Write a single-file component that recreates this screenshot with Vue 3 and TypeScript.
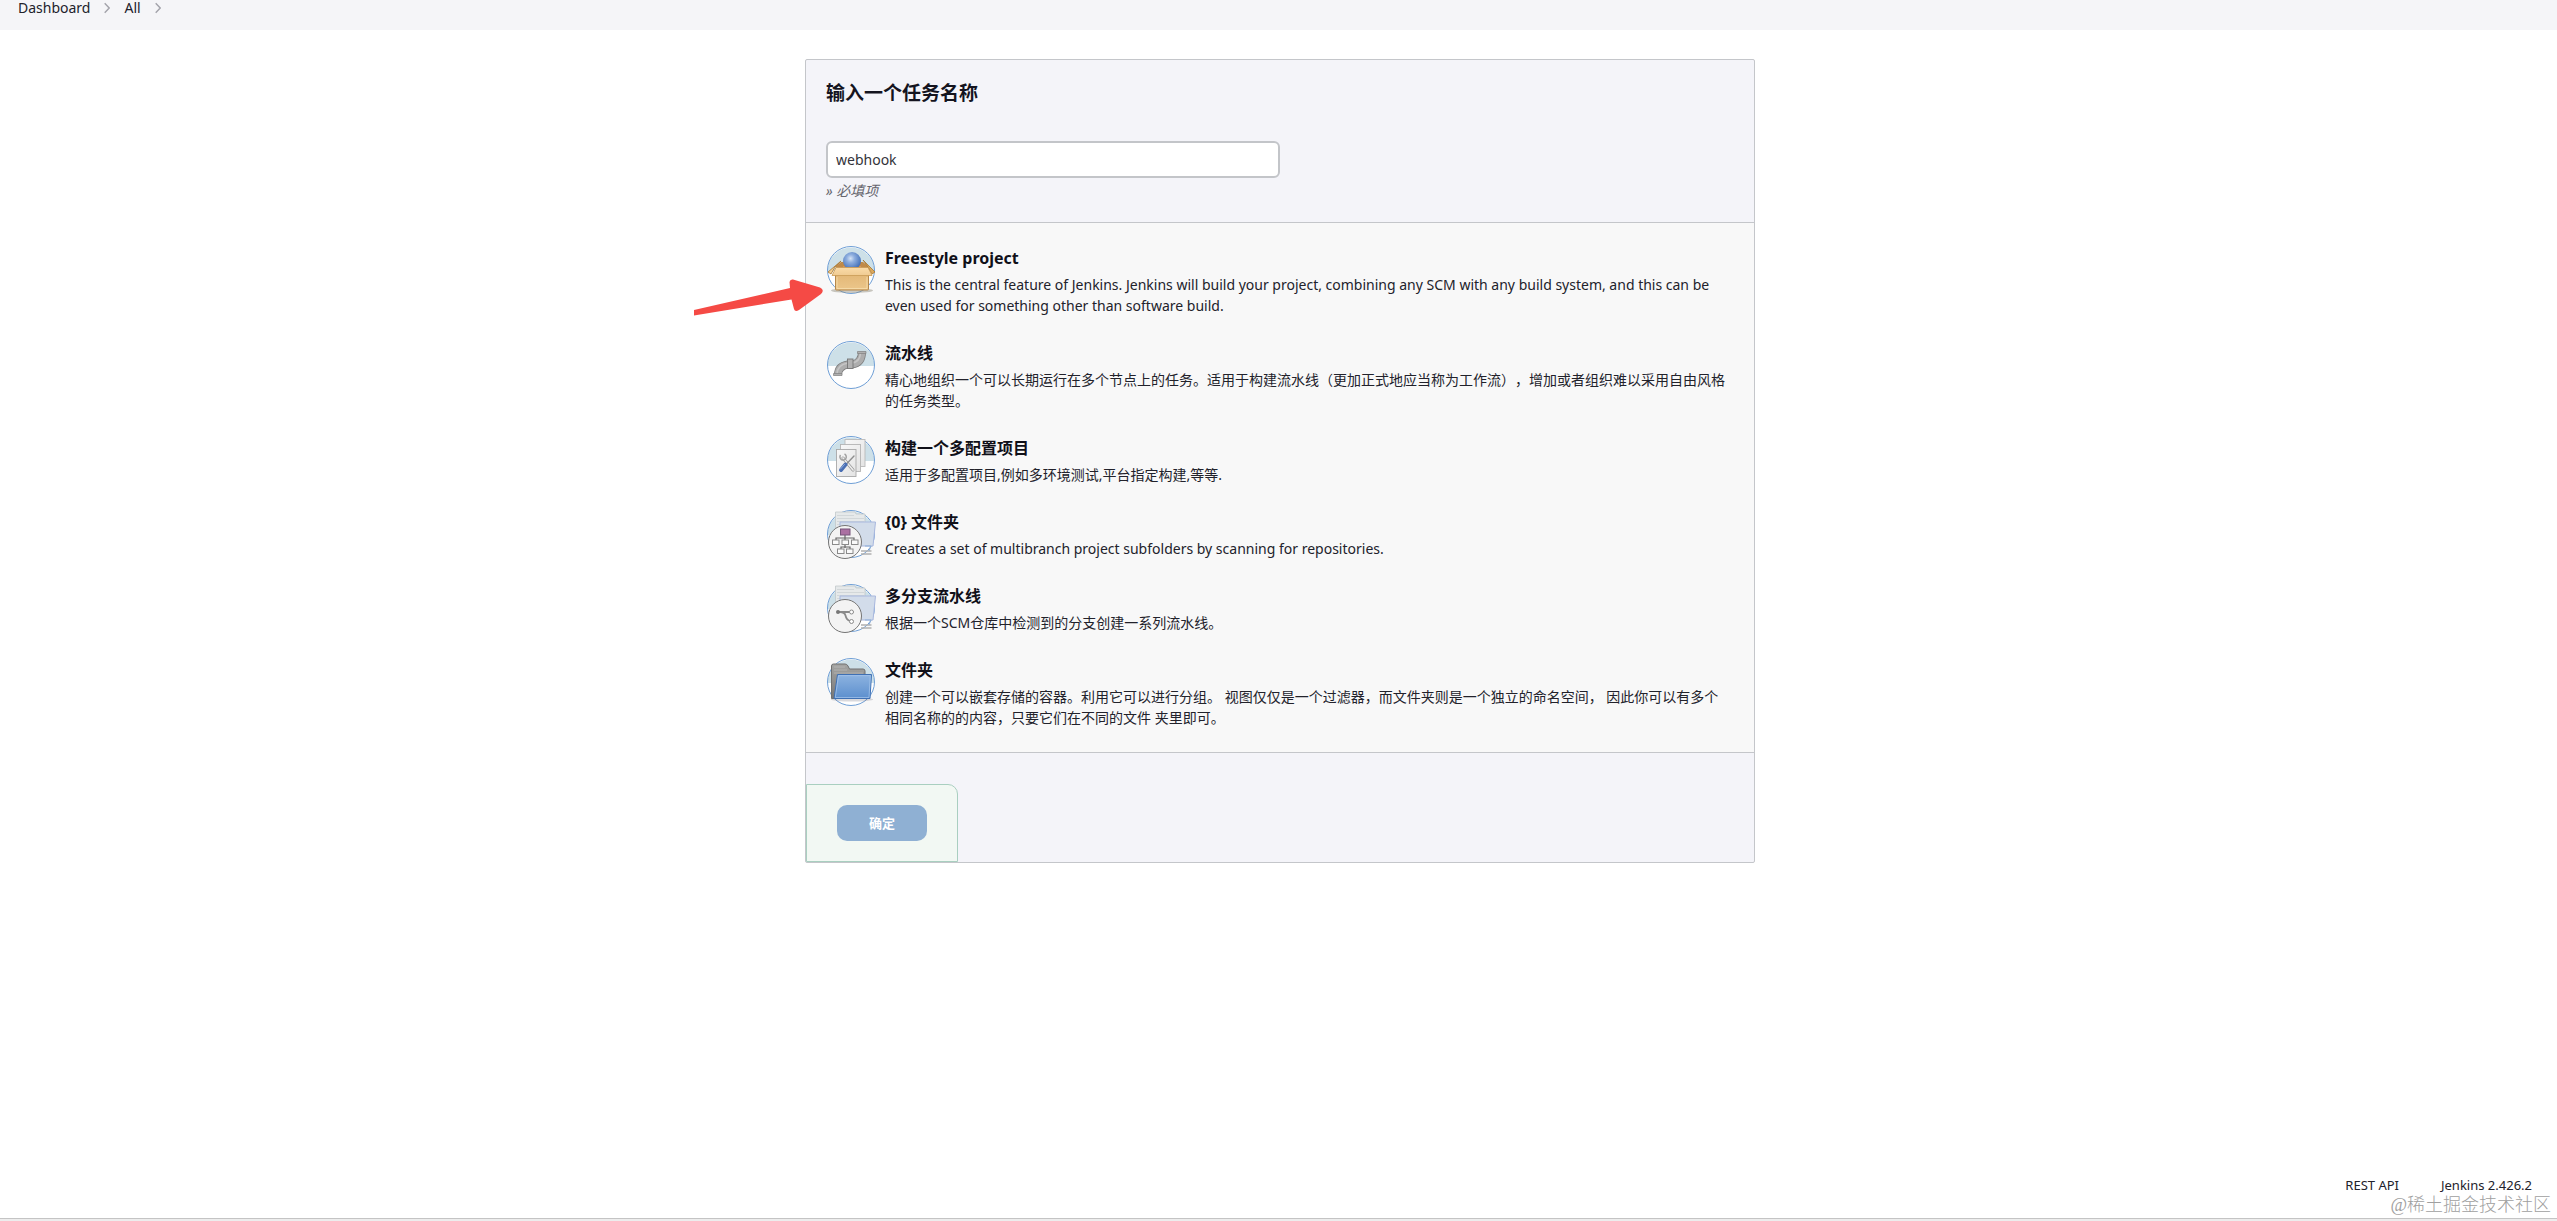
<script setup lang="ts">
import { ref } from 'vue'

type IconName = 'box' | 'pipe' | 'matrix' | 'org' | 'branch' | 'folder'

interface JobType {
  icon: IconName
  title: string
  text: string
}

const jobName = ref('webhook')
const selected = ref<IconName | null>(null)

const crumbs: string[] = ['Dashboard', 'All']

const jobTypes: JobType[] = [
  {
    icon: 'box',
    title: 'Freestyle project',
    text: 'This is the central feature of Jenkins. Jenkins will build your project, combining any SCM with any build system, and this can be even used for something other than software build.',
  },
  {
    icon: 'pipe',
    title: '流水线',
    text: '精心地组织一个可以长期运行在多个节点上的任务。适用于构建流水线（更加正式地应当称为工作流），增加或者组织难以采用自由风格的任务类型。',
  },
  {
    icon: 'matrix',
    title: '构建一个多配置项目',
    text: '适用于多配置项目,例如多环境测试,平台指定构建,等等.',
  },
  {
    icon: 'org',
    title: '{0} 文件夹',
    text: 'Creates a set of multibranch project subfolders by scanning for repositories.',
  },
  {
    icon: 'branch',
    title: '多分支流水线',
    text: '根据一个SCM仓库中检测到的分支创建一系列流水线。',
  },
  {
    icon: 'folder',
    title: '文件夹',
    text: '创建一个可以嵌套存储的容器。利用它可以进行分组。 视图仅仅是一个过滤器，而文件夹则是一个独立的命名空间， 因此你可以有多个相同名称的的内容，只要它们在不同的文件 夹里即可。',
  },
]
</script>

<template>
  <div class="page">
    <svg class="defs" width="0" height="0" aria-hidden="true">
      <defs>
        <linearGradient id="g-box" x1="0" y1="0" x2="0" y2="1">
          <stop offset="0" stop-color="#dfb270" />
          <stop offset="1" stop-color="#ecc68a" />
        </linearGradient>
        <linearGradient id="g-flap" x1="0" y1="0" x2="0" y2="1">
          <stop offset="0" stop-color="#fadba8" />
          <stop offset="1" stop-color="#f0cb92" />
        </linearGradient>
        <radialGradient id="g-ball" cx="0.42" cy="0.36" r="0.62">
          <stop offset="0" stop-color="#d5e3f5" />
          <stop offset="0.35" stop-color="#8fafdf" />
          <stop offset="1" stop-color="#4370b8" />
        </radialGradient>
        <linearGradient id="g-folder" x1="0" y1="0" x2="0" y2="1">
          <stop offset="0" stop-color="#8db3e0" />
          <stop offset="1" stop-color="#5c8fce" />
        </linearGradient>
        <linearGradient id="g-paper" x1="0" y1="0" x2="1" y2="1">
          <stop offset="0" stop-color="#f8f8f8" />
          <stop offset="1" stop-color="#e4e4e4" />
        </linearGradient>
        <linearGradient id="g-back" x1="0" y1="0" x2="0" y2="1">
          <stop offset="0" stop-color="#a5a5a3" />
          <stop offset="1" stop-color="#767676" />
        </linearGradient>
      </defs>
    </svg>

    <header class="crumb-bar">
      <nav aria-label="breadcrumb">
        <template v-for="c in crumbs" :key="c">
          <a href="#">{{ c }}</a>
          <svg class="chev" width="6" height="12" viewBox="0 0 6 12" fill="none" stroke="#a3a3ab" stroke-width="1.4">
            <path d="M0.7 1.2 L5.2 6 L0.7 10.8" />
          </svg>
        </template>
      </nav>
    </header>

    <main>
      <form class="card" @submit.prevent>
        <section class="name">
          <h1><label for="name">输入一个任务名称</label></h1>
          <input id="name" v-model="jobName" type="text" autocomplete="off" spellcheck="false" />
          <p class="hint">» 必填项</p>
        </section>

        <ul class="types">
          <li v-for="j in jobTypes" :key="j.icon" @click="selected = j.icon">
            <svg class="icon" width="48" height="48" viewBox="0 0 48 48" aria-hidden="true">
              <circle cx="24" cy="24" r="23.5" fill="#fff" />
              <path d="M0.5 25 A23.5 23.5 0 1 1 47.5 25 Z" fill="#cde0e8" />
              <circle cx="24" cy="24" r="23.5" fill="none" stroke="#6f9fd6" />

              <g v-if="j.icon === 'box'">
                <ellipse cx="25" cy="44.5" rx="21" ry="2.5" fill="#8c8878" opacity="0.45" />
                <path d="M9 20 L14 16 H36 L41 20 V26 H9 Z" fill="#c08a48" />
                <circle cx="25" cy="15" r="9" fill="url(#g-ball)" />
                <path d="M16 20 Q25 25 34 20 V24 H16 Z" fill="#dc9660" />
                <path d="M8 21 L14 15 L1 26 L4 28 Z" fill="#f3cf92" stroke="#a8762e" stroke-width="0.8" />
                <path d="M41 21 L36 14 L48 26 L45 28 Z" fill="#dca95d" stroke="#a8762e" stroke-width="0.8" />
                <rect x="8.5" y="22" width="33" height="22" rx="1" fill="url(#g-box)" stroke="#b5874a" />
                <path d="M9 21.5 H41 L45 29.5 H5 Z" fill="url(#g-flap)" stroke="#c99a55" stroke-width="0.8" />
                <path d="M10 31 V42.5 H40 V31" fill="none" stroke="#f8dfae" stroke-width="0.8" />
              </g>

              <g v-else-if="j.icon === 'pipe'" fill="none">
                <path d="M11 34 Q11 25 21 23.5 H25 Q35 22 35 11" stroke="#7c7c7c" stroke-width="8" />
                <path d="M11 34 Q11 25 21 23.5 H25 Q35 22 35 11" stroke="#adadad" stroke-width="6.5" />
                <path d="M10 33 Q10 24 21 22 H25 Q33 21 33.5 12" stroke="#c5c5c5" stroke-width="1.6" />
                <rect x="20.5" y="18" width="5.5" height="9.5" fill="#b2b2b2" stroke="#777" stroke-width="0.9" />
                <path d="M6.5 32.5 H15 V34.5 H6.5 Z M30.5 10.5 H39 V12.5 H30.5 Z" fill="#b0b0b0" stroke="#808080" stroke-width="0.7" />
              </g>

              <g v-else-if="j.icon === 'matrix'">
                <rect x="18" y="3.5" width="20" height="27" fill="url(#g-paper)" stroke="#bababa" stroke-width="0.9" />
                <rect x="13.5" y="8.5" width="20" height="27" fill="url(#g-paper)" stroke="#b4b4b4" stroke-width="0.9" />
                <rect x="9.5" y="13.5" width="19.5" height="27" fill="url(#g-paper)" stroke="#a8a8a8" stroke-width="0.9" />
                <path d="M16 22 L26 34" stroke="#949494" stroke-width="3" stroke-linecap="round" />
                <path d="M16 22 L26 34" stroke="#ececec" stroke-width="1.7" stroke-linecap="round" />
                <path d="M13.5 19 A3.2 3.2 0 1 0 17.5 18" fill="none" stroke="#a2a2a2" stroke-width="1.5" />
                <path d="M18.5 29 L27 20" stroke="#8f8f8f" stroke-width="1.4" stroke-linecap="round" />
                <path d="M14 34 L18.5 28.5" stroke="#4a6fb3" stroke-width="4" stroke-linecap="round" />
                <path d="M13.5 33 L17.5 28.5" stroke="#8cabdf" stroke-linecap="round" />
              </g>

              <g v-else-if="j.icon === 'org' || j.icon === 'branch'">
                <path d="M8.5 2 H28 L29 4 H38 V24 H8.5 Z" fill="#e6e9ea" stroke="#c2c8ca" stroke-width="0.8" />
                <path d="M10 5.5 H27 M10 8.5 H37 M10 11.5 H37 M10 14.5 H30" stroke="#cdd2d4" stroke-width="0.8" />
                <path d="M13 12 H48.5 L46 36 H13 Z" fill="#d2dcea" stroke="#a9b8de" />
                <path d="M34 41 H44.5 M34 44 H44.5" stroke="#b0b0b0" stroke-width="1.5" />
                <path d="M38 36 H44 L42 41" fill="none" stroke="#8fb0d8" />
                <circle cx="18" cy="32" r="16.5" fill="#f3f3f3" stroke="#757575" />
                <g v-if="j.icon === 'org'" fill="none" stroke="#666">
                  <path d="M18 25 V29 M9 31 V28 H27 V31 M18 28 V38 M14 39 V37 H23 V39" stroke-width="1.2" />
                  <rect x="13.5" y="19" width="9.5" height="6" fill="#ab70a2" stroke="#76557a" />
                  <g fill="#fafafa" stroke="#8a8a8a">
                    <rect x="5.5" y="30" width="6.5" height="4.5" />
                    <rect x="15" y="30" width="6.5" height="4.5" />
                    <rect x="24.5" y="30" width="6.5" height="4.5" />
                    <rect x="10.5" y="39" width="6.5" height="4.5" />
                    <rect x="19.5" y="39" width="6.5" height="4.5" />
                  </g>
                </g>
                <g v-else fill="none" stroke="#8a8a8a">
                  <path d="M11 28 H22.5 M13 28 Q17.5 28 18.5 31.5 Q19.5 36 23 37" stroke-width="1.8" />
                  <circle cx="11" cy="28" r="2" fill="#777" stroke="none" />
                  <circle cx="24.5" cy="28" r="2" fill="#fff" />
                  <circle cx="24.5" cy="37.5" r="2" fill="#fff" />
                </g>
              </g>

              <g v-else>
                <ellipse cx="25" cy="41.5" rx="21" ry="2" fill="#667" opacity="0.25" />
                <path d="M4.5 40.5 V8 Q4.5 6 6.5 6 H18 Q20 6 21 8 L22.500 11 H36 Q38 11 38 13 V40.5 Z" fill="url(#g-back)" stroke="#707070" />
                <path d="M7 9 H18 M7 12 H20 M7 15 H36" stroke="#bbb" stroke-width="0.7" />
                <path d="M10.5 16.5 H44.5 L43 40.5 H7 Z" fill="url(#g-folder)" stroke="#3f70b3" />
                <path d="M11.5 17.7 H43.3 L42 39.5 H8.3 Z" fill="none" stroke="#a7c7ec" stroke-width="0.7" />
              </g>
            </svg>
            <div class="body">
              <h2>{{ j.title }}</h2>
              <p>{{ j.text }}</p>
            </div>
          </li>
        </ul>

        <div class="actions">
          <div class="ok-box">
            <button type="submit">确定</button>
          </div>
        </div>

        <svg class="pointer" width="132" height="38" viewBox="0 0 132 38" aria-hidden="true">
          <path
            d="M2 31 L98 9 L97.500 3 Q98 0 101 0.500 L128 8.500 Q133 11 129 15 L107 31 Q103 33.500 102 30 L99.500 20.500 L2 36.500 Z"
            fill="#f54a45"
          />
        </svg>
      </form>
    </main>

    <footer>
      <a href="#">REST API</a>
      <a href="#">Jenkins 2.426.2</a>
      <span class="mark">@稀土掘金技术社区</span>
    </footer>
  </div>
</template>

<style>
body {
  margin: 0;
  background: #fff;
}
</style>

<style scoped>
.page {
  box-sizing: border-box;
  min-height: 100vh;
  display: flex;
  flex-direction: column;
  border-bottom: 2px solid #ededed;
  box-shadow: inset 0 -1px #c4c4c4;
  font-family: 'Noto Sans', 'Noto Sans CJK SC', sans-serif;
  font-size: 14px;
  line-height: 21px;
  text-spacing-trim: space-all;
  color: #22222b;
}
.defs {
  position: absolute;
}
a {
  color: inherit;
  text-decoration: none;
}
.crumb-bar {
  height: 30px;
  background: #f5f5f8;
}
.crumb-bar nav {
  display: flex;
  align-items: center;
  gap: 14px;
  height: 15px;
  padding-left: 18px;
}
main {
  flex: 1;
  padding: 29px 0 0 3px;
}
.card {
  position: relative;
  box-sizing: border-box;
  width: 950px;
  max-width: 100%;
  margin: 0 auto;
  border: 1px solid #c4c6ca;
  border-radius: 2px;
  background: #f4f4f9;
}
.name {
  height: 163px;
  box-sizing: border-box;
  padding: 21px 20px 0;
  border-bottom: 1px solid #c4c6ca;
}
h1 {
  margin: 0 0 35px;
  font-size: 19px;
  line-height: 25px;
  color: #14141f;
}
input {
  display: block;
  box-sizing: border-box;
  width: 454px;
  max-width: 100%;
  height: 37px;
  padding: 0 8px;
  border: 2px solid #c3c5c9;
  border-radius: 6px;
  background: #fff;
  font: inherit;
  color: #33333a;
  outline: none;
}
.hint {
  margin: 2px 0 0;
  font-style: italic;
  color: #66666e;
}
.types {
  list-style: none;
  margin: 0;
  padding: 23px 23px 24px 21px;
  display: flex;
  flex-direction: column;
  gap: 25px;
  border-bottom: 1px solid #c4c6ca;
  background: #f8f8f8;
}
.types li {
  display: flex;
  gap: 10px;
  cursor: pointer;
}
.icon {
  flex: none;
  margin-bottom: -4px;
  overflow: visible;
}
.body {
  flex: 1;
}
h2 {
  margin: 0 0 4px;
  font-size: 16px;
  line-height: 24px;
  color: #101018;
}
.body p {
  margin: 0;
}
.actions {
  display: flex;
  padding-top: 31px;
}
.ok-box {
  padding: 20px 30px;
  border: 1px solid #a9cfc0;
  border-radius: 0 10px 0 0;
  background: #f2f8f3;
}
button {
  display: block;
  width: 90px;
  height: 36px;
  border: 0;
  border-radius: 10px;
  background: #8fb0d3;
  color: #fff;
  font: inherit;
  font-size: 13px;
  font-weight: 700;
  cursor: pointer;
}
.pointer {
  position: absolute;
  left: -114px;
  top: 219px;
}
footer {
  position: relative;
  display: flex;
  justify-content: flex-end;
  gap: 42px;
  padding: 0 25px 23px 0;
  font-size: 13px;
}
.mark {
  position: absolute;
  right: 6px;
  bottom: 3px;
  font-family: 'Liberation Serif', 'Noto Sans CJK SC', serif;
  font-size: 18px;
  font-weight: 300;
  color: #a0a0a0;
}
</style>
